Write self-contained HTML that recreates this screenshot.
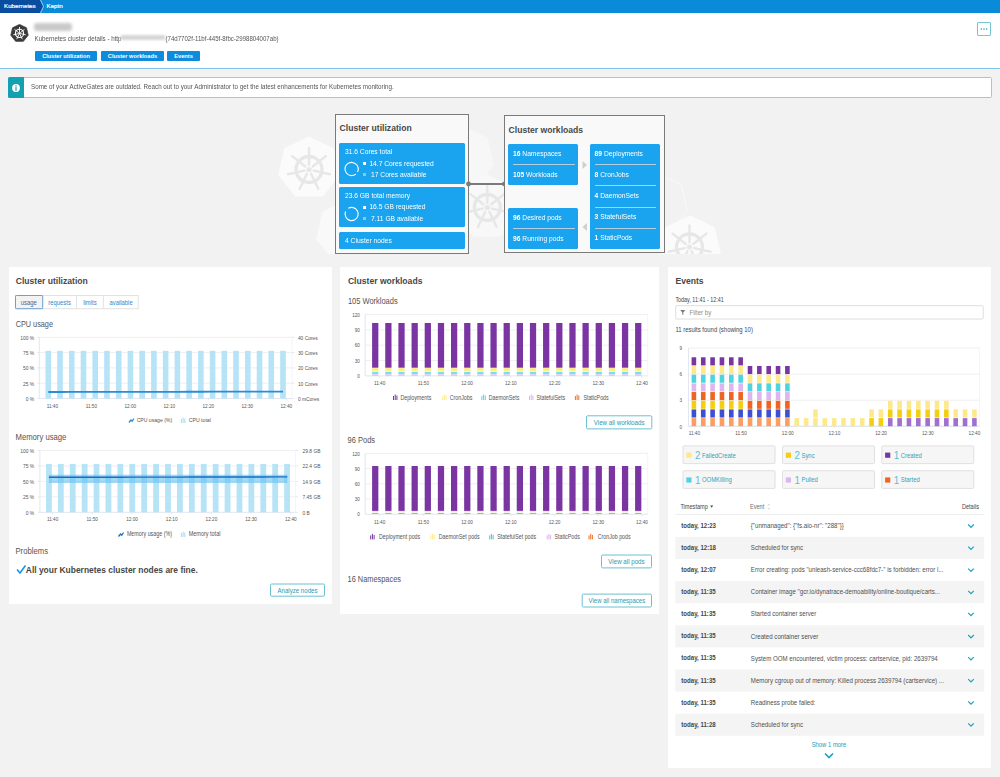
<!DOCTYPE html>
<html><head><meta charset="utf-8">
<style>
*{box-sizing:border-box;margin:0;padding:0}
html,body{width:1000px;height:777px;overflow:hidden}
body{background:#f2f2f2;font-family:"Liberation Sans",sans-serif;color:#454646;position:relative}
.a{position:absolute;white-space:nowrap}
.bc{left:0;top:0;width:1000px;height:13px;background:#0a8bd9}
.bcd{left:0;top:0;width:43px;height:13px;background:#0a4ca0;clip-path:polygon(0 0,40px 0,43px 6.5px,40px 13px,0 13px)}
.bct{color:#fff;font-size:6.2px;top:2px;-webkit-text-stroke:0.2px #fff}
.hdr{left:0;top:13px;width:1000px;height:56px;background:#fff;border-bottom:1px solid #80c3ea}
.btn{height:10px;background:#0e8cdb;border-radius:1px;color:#fff;font-size:5.7px;font-weight:bold;text-align:center;line-height:10px}
.alert{left:8px;top:77px;width:984px;height:21px;background:#fff;border:1px solid #8fd1d9;border-radius:1.5px}
.panel{background:#fff;top:267px}
.ptitle{font-weight:bold;font-size:8.6px;color:#454646}
.sub{font-size:8.6px;color:#525252}
.ol{background:#f9f9f9;border:1px solid #7a7a7a}
.bl{background:#1aa3ee;color:#fff;border-radius:1.5px}
.obtn{border:1px solid #5db6c6;border-radius:1.5px;color:#1a8aa0;font-size:6px;text-align:center;background:#fff}
.ovt{font-size:6.7px;color:#fff;line-height:8px;transform:scaleY(1.15);transform-origin:0 6.3px}
.sq{width:3px;height:3px;background:#fff}
.sep{height:1px;background:#b3cfe0}
.sy{transform:scaleY(1.2);transform-origin:0 5.7px}
</style></head><body>

<!-- breadcrumb -->
<div class="a bc"></div>
<div class="a bcd"></div>
<div class="a" style="left:39.5px;top:0;width:4px;height:13px;background:transparent;"><svg width="5" height="13" style="display:block"><polyline points="0.5,0 3.5,6.5 0.5,13" fill="none" stroke="#bcd7ef" stroke-width="0.8"/></svg></div>
<div class="a bct" style="left:4px">Kubernetes</div>
<div class="a bct" style="left:46.5px">Keptn</div>

<!-- header -->
<div class="a hdr"></div>
<div class="a" style="left:10px;top:24px;width:19px;height:18px">
<svg width="19" height="18" viewBox="0 0 19 18" style="display:block">
<polygon points="9.50,0.40 16.46,3.75 18.18,11.28 13.36,17.32 5.64,17.32 0.82,11.28 2.54,3.75" fill="#3b3b3b" stroke="#3b3b3b" stroke-width="0.8" stroke-linejoin="round"/>
<circle cx="9.5" cy="9.4" r="4.1" fill="none" stroke="#fff" stroke-width="1.1"/>
<g stroke="#fff" stroke-width="0.9" stroke-linecap="round"><line x1="9.50" y1="8.10" x2="9.50" y2="3.40"/><line x1="10.52" y1="8.59" x2="14.19" y2="5.66"/><line x1="10.77" y1="9.69" x2="15.35" y2="10.74"/><line x1="10.06" y1="10.57" x2="12.10" y2="14.81"/><line x1="8.94" y1="10.57" x2="6.90" y2="14.81"/><line x1="8.23" y1="9.69" x2="3.65" y2="10.74"/><line x1="8.48" y1="8.59" x2="4.81" y2="5.66"/></g>
<circle cx="9.5" cy="9.4" r="1.1" fill="#fff"/>
</svg></div>
<div class="a" style="left:34px;top:23px;width:38px;height:8px;background:#c9c9c9;filter:blur(1.5px);border-radius:3px"></div>
<div class="a sy" style="left:34.5px;top:35.2px;font-size:6.2px;color:#555">Kubernetes cluster details - http</div>
<div class="a" style="left:121px;top:35px;width:44px;height:5px;background:#d6d6d6;filter:blur(1.2px)"></div>
<div class="a sy" style="left:165.5px;top:35.2px;font-size:6.1px;color:#555">(74d7702f-11bf-445f-8fbc-2998804007ab)</div>
<div class="a btn" style="left:35px;top:51px;width:62px">Cluster utilization</div>
<div class="a btn" style="left:101px;top:51px;width:63px">Cluster workloads</div>
<div class="a btn" style="left:167px;top:51px;width:33px">Events</div>
<div class="a" style="left:977px;top:22px;width:14px;height:14px;border:1px solid #76c5d2;border-radius:1px;background:#fff"><svg width="12" height="12" style="display:block"><circle cx="3.3" cy="6" r="0.75" fill="#2a9bb0"/><circle cx="6" cy="6" r="0.75" fill="#2a9bb0"/><circle cx="8.7" cy="6" r="0.75" fill="#2a9bb0"/></svg></div>

<!-- alert -->
<div class="a alert"></div>
<div class="a" style="left:8px;top:77px;width:16px;height:21px;background:#13a0b1;border-radius:1.5px 0 0 1.5px"></div>
<svg class="a" style="left:11px;top:82.5px" width="10" height="10"><circle cx="5" cy="5" r="3.9" fill="#fff"/><rect x="4.4" y="2.3" width="1.2" height="1.2" fill="#13a0b1"/><rect x="4.4" y="4.1" width="1.2" height="3.6" fill="#13a0b1"/></svg>
<div class="a sy" style="left:31px;top:83.1px;font-size:6.26px;color:#555">Some of your ActiveGates are outdated. Reach out to your Administrator to get the latest enhancements for Kubernetes monitoring.</div>

<!-- overview -->
<svg class="a" style="left:250px;top:100px" width="500" height="154" viewBox="250 100 500 154">
<defs><g id="wheel" fill="none" stroke="#e7e7e7"><circle r="13" stroke-width="3.3"/><g stroke-width="2.4" stroke-linecap="round"><line x1="0.00" y1="-4.80" x2="0.00" y2="-21.50"/><line x1="3.75" y1="-2.99" x2="16.81" y2="-13.41"/><line x1="4.68" y1="1.07" x2="20.96" y2="4.78"/><line x1="2.08" y1="4.32" x2="9.33" y2="19.37"/><line x1="-2.08" y1="4.32" x2="-9.33" y2="19.37"/><line x1="-4.68" y1="1.07" x2="-20.96" y2="4.78"/><line x1="-3.75" y1="-2.99" x2="-16.81" y2="-13.41"/></g><circle r="2.6" fill="#e7e7e7" stroke="none"/></g></defs>
<polygon points="462.00,127.00 486.24,138.67 492.22,164.90 475.45,185.93 448.55,185.93 431.78,164.90 437.76,138.67" fill="#f7f7f7" stroke="#f7f7f7" stroke-width="3" stroke-linejoin="round"/>
<polygon points="348.00,201.00 372.24,212.67 378.22,238.90 361.45,259.93 334.55,259.93 317.78,238.90 323.76,212.67" fill="#f9f9f9" stroke="#f9f9f9" stroke-width="3" stroke-linejoin="round"/>
<polygon points="309.00,138.00 332.45,149.30 338.25,174.68 322.02,195.03 295.98,195.03 279.75,174.68 285.55,149.30" fill="#fbfbfb" stroke="#fbfbfb" stroke-width="3" stroke-linejoin="round"/>
<use href="#wheel" x="309" y="169.5"/>
<polygon points="487.00,176.00 511.24,187.67 517.22,213.90 500.45,234.93 473.55,234.93 456.78,213.90 462.76,187.67" fill="#f8f8f8" stroke="#f8f8f8" stroke-width="3" stroke-linejoin="round"/>
<use href="#wheel" x="487.3" y="207.5"/>
<polygon points="535.00,141.00 559.24,152.67 565.22,178.90 548.45,199.93 521.55,199.93 504.78,178.90 510.76,152.67" fill="none" stroke="#f9f9f9" stroke-width="1"/>
<polygon points="657.00,173.00 681.24,184.67 687.22,210.90 670.45,231.93 643.55,231.93 626.78,210.90 632.76,184.67" fill="none" stroke="#fafafa" stroke-width="1"/>
<polygon points="690.00,217.00 713.45,228.30 719.25,253.68 703.02,274.03 676.98,274.03 660.75,253.68 666.55,228.30" fill="#fbfbfb" stroke="#fbfbfb" stroke-width="3" stroke-linejoin="round"/>
<use href="#wheel" x="689.5" y="247"/>
</svg>

<div class="a ol" style="left:335px;top:114px;width:134px;height:140px"></div>
<div class="a" style="left:339.6px;top:123px;font-size:8.6px;font-weight:bold;color:#484848">Cluster utilization</div>
<div class="a bl" style="left:339.3px;top:143.2px;width:125.8px;height:40.5px"></div>
<div class="a bl" style="left:339.3px;top:187.3px;width:125.8px;height:40.2px"></div>
<div class="a bl" style="left:339.3px;top:231.6px;width:125.8px;height:17.8px"></div>
<div class="a ovt" style="left:345px;top:148px">31.6 Cores total</div>
<div class="a ovt" style="left:369.4px;top:159.6px">14.7 Cores requested</div>
<div class="a ovt" style="left:371px;top:170.6px">17 Cores available</div>
<div class="a ovt" style="left:345px;top:192.4px">23.6 GB total memory</div>
<div class="a ovt" style="left:369.4px;top:203.4px">16.5 GB requested</div>
<div class="a ovt" style="left:371px;top:214.6px">7.11 GB available</div>
<div class="a ovt" style="left:345px;top:236.6px">4 Cluster nodes</div>
<div class="a sq" style="left:363px;top:162px"></div>
<div class="a sq" style="left:363px;top:173px;opacity:.45"></div>
<div class="a sq" style="left:363px;top:206px"></div>
<div class="a sq" style="left:363px;top:217px;opacity:.45"></div>
<svg class="a" style="left:343px;top:161px" width="17" height="17"><circle cx="8.6" cy="8" r="6.6" fill="none" stroke="#fff" stroke-width="1.1" stroke-dasharray="38.6 2.9" transform="rotate(50 8.6 8)"/></svg>
<svg class="a" style="left:343px;top:205.5px" width="17" height="17"><circle cx="8.6" cy="8" r="6.6" fill="none" stroke="#fff" stroke-width="1.1" stroke-dasharray="36.9 4.6" transform="rotate(240 8.6 8)"/></svg>
<svg class="a" style="left:466px;top:180px" width="42" height="8"><line x1="2.5" y1="4" x2="38.5" y2="4" stroke="#7a7a7a" stroke-width="1.8"/><circle cx="2.5" cy="4" r="2.4" fill="#7a7a7a"/><circle cx="38.5" cy="4" r="2.4" fill="#7a7a7a"/></svg>

<div class="a ol" style="left:504px;top:115px;width:160.5px;height:138px"></div>
<div class="a" style="left:508.6px;top:124.6px;font-size:8.6px;font-weight:bold;color:#484848">Cluster workloads</div>
<div class="a bl" style="left:508.2px;top:144px;width:70.2px;height:41px"></div>
<div class="a bl" style="left:508.2px;top:208.1px;width:70.2px;height:40.9px"></div>
<div class="a bl" style="left:590.2px;top:144px;width:70.2px;height:105px"></div>
<div class="a sep" style="left:513px;top:164.2px;width:61.5px"></div>
<div class="a sep" style="left:513px;top:228.2px;width:61.5px"></div>
<div class="a sep" style="left:594.6px;top:164.2px;width:61.5px"></div>
<div class="a sep" style="left:594.6px;top:185.4px;width:61.5px"></div>
<div class="a sep" style="left:594.6px;top:207.2px;width:61.5px"></div>
<div class="a sep" style="left:594.6px;top:228.2px;width:61.5px"></div>
<div class="a ovt" style="left:513px;top:149.6px"><b>16</b> Namespaces</div>
<div class="a ovt" style="left:513px;top:170.6px"><b>105</b> Workloads</div>
<div class="a ovt" style="left:513px;top:213.6px"><b>96</b> Desired pods</div>
<div class="a ovt" style="left:513px;top:234.6px"><b>96</b> Running pods</div>
<div class="a ovt" style="left:594.6px;top:149.6px"><b>89</b> Deployments</div>
<div class="a ovt" style="left:594.6px;top:170.6px"><b>8</b> CronJobs</div>
<div class="a ovt" style="left:594.6px;top:191.6px"><b>4</b> DaemonSets</div>
<div class="a ovt" style="left:594.6px;top:213.4px"><b>3</b> StatefulSets</div>
<div class="a ovt" style="left:594.6px;top:234.4px"><b>1</b> StaticPods</div>
<svg class="a" style="left:581px;top:160px" width="8" height="10"><polygon points="1.5,1 6,5 1.5,9" fill="#cfcfcf"/></svg>
<svg class="a" style="left:581px;top:221.6px" width="8" height="10"><polygon points="6,1 1.5,5 6,9" fill="#cfcfcf"/></svg>


<div class="a" style="left:8.5px;top:267px;width:323.0px;height:337px;background:#fff"></div>
<div class="a" style="left:340.3px;top:267px;width:318.7px;height:347.29999999999995px;background:#fff"></div>
<div class="a" style="left:668px;top:267px;width:323px;height:500.70000000000005px;background:#fff"></div>
<svg class="a" style="left:0;top:0" width="1000" height="777" viewBox="0 0 1000 777" font-family=""Liberation Sans",sans-serif"><text x="15.70" y="0" transform="translate(0 284.26) scale(1 1.06)" font-size="8.6" fill="#474747" font-weight="bold" text-anchor="start" >Cluster utilization</text>
<rect x="15.50" y="295.50" width="122.70" height="13.20" fill="#fff" stroke="#e2e2e2" stroke-width="1"/>
<line x1="42.70" y1="295.50" x2="42.70" y2="308.70" stroke="#e2e2e2" stroke-width="1" />
<line x1="76.50" y1="295.50" x2="76.50" y2="308.70" stroke="#e2e2e2" stroke-width="1" />
<line x1="103.40" y1="295.50" x2="103.40" y2="308.70" stroke="#e2e2e2" stroke-width="1" />
<rect x="15.50" y="295.50" width="27.20" height="13.20" fill="#f3f3f3" stroke="#6f9fcf" stroke-width="1" rx="0.8"/>
<text x="28.85" y="0" transform="translate(0 305.21) scale(1 1.2)" font-size="5.9" fill="#3f6797" text-anchor="middle" >usage</text>
<text x="59.60" y="0" transform="translate(0 305.21) scale(1 1.2)" font-size="5.9" fill="#2d89cf" text-anchor="middle" >requests</text>
<text x="89.95" y="0" transform="translate(0 305.21) scale(1 1.2)" font-size="5.9" fill="#2d89cf" text-anchor="middle" >limits</text>
<text x="121.05" y="0" transform="translate(0 305.21) scale(1 1.2)" font-size="5.9" fill="#2d89cf" text-anchor="middle" >available</text>
<text x="15.70" y="0" transform="translate(0 326.87) scale(1 1.2)" font-size="7.3" fill="#545454" text-anchor="start" >CPU usage</text>
<line x1="39.30" y1="337.30" x2="292.00" y2="337.30" stroke="#ebebeb" stroke-width="0.8" />
<line x1="37.30" y1="337.30" x2="39.30" y2="337.30" stroke="#d9dfec" stroke-width="0.7" />
<text x="34.20" y="339.65" font-size="4.9" fill="#555" text-anchor="end" >100 %</text>
<text x="297.90" y="339.65" font-size="4.9" fill="#555" text-anchor="start" >40 Cores</text>
<line x1="292.00" y1="337.30" x2="294.50" y2="337.30" stroke="#d9dfec" stroke-width="0.7" />
<line x1="39.30" y1="352.60" x2="292.00" y2="352.60" stroke="#ebebeb" stroke-width="0.8" />
<line x1="37.30" y1="352.60" x2="39.30" y2="352.60" stroke="#d9dfec" stroke-width="0.7" />
<text x="34.20" y="354.95" font-size="4.9" fill="#555" text-anchor="end" >75 %</text>
<text x="297.90" y="354.95" font-size="4.9" fill="#555" text-anchor="start" >30 Cores</text>
<line x1="292.00" y1="352.60" x2="294.50" y2="352.60" stroke="#d9dfec" stroke-width="0.7" />
<line x1="39.30" y1="367.90" x2="292.00" y2="367.90" stroke="#ebebeb" stroke-width="0.8" />
<line x1="37.30" y1="367.90" x2="39.30" y2="367.90" stroke="#d9dfec" stroke-width="0.7" />
<text x="34.20" y="370.25" font-size="4.9" fill="#555" text-anchor="end" >50 %</text>
<text x="297.90" y="370.25" font-size="4.9" fill="#555" text-anchor="start" >20 Cores</text>
<line x1="292.00" y1="367.90" x2="294.50" y2="367.90" stroke="#d9dfec" stroke-width="0.7" />
<line x1="39.30" y1="383.20" x2="292.00" y2="383.20" stroke="#ebebeb" stroke-width="0.8" />
<line x1="37.30" y1="383.20" x2="39.30" y2="383.20" stroke="#d9dfec" stroke-width="0.7" />
<text x="34.20" y="385.55" font-size="4.9" fill="#555" text-anchor="end" >25 %</text>
<text x="297.90" y="385.55" font-size="4.9" fill="#555" text-anchor="start" >10 Cores</text>
<line x1="292.00" y1="383.20" x2="294.50" y2="383.20" stroke="#d9dfec" stroke-width="0.7" />
<line x1="39.30" y1="398.50" x2="292.00" y2="398.50" stroke="#d9dfec" stroke-width="0.8" />
<line x1="37.30" y1="398.50" x2="39.30" y2="398.50" stroke="#d9dfec" stroke-width="0.7" />
<text x="34.20" y="400.85" font-size="4.9" fill="#555" text-anchor="end" >0 %</text>
<text x="297.90" y="400.85" font-size="4.9" fill="#555" text-anchor="start" >0 mCores</text>
<line x1="292.00" y1="398.50" x2="294.50" y2="398.50" stroke="#d9dfec" stroke-width="0.7" />
<line x1="39.30" y1="337.30" x2="39.30" y2="398.50" stroke="#d9dfec" stroke-width="0.8" />
<line x1="292.00" y1="337.30" x2="292.00" y2="398.50" stroke="#efefef" stroke-width="0.6" />
<rect x="45.50" y="350.80" width="5.60" height="47.70" fill="#b7e3f7" />
<rect x="57.23" y="350.80" width="5.60" height="47.70" fill="#b7e3f7" />
<rect x="68.97" y="350.80" width="5.60" height="47.70" fill="#b7e3f7" />
<rect x="80.70" y="350.80" width="5.60" height="47.70" fill="#b7e3f7" />
<rect x="92.44" y="350.80" width="5.60" height="47.70" fill="#b7e3f7" />
<rect x="104.17" y="350.80" width="5.60" height="47.70" fill="#b7e3f7" />
<rect x="115.91" y="350.80" width="5.60" height="47.70" fill="#b7e3f7" />
<rect x="127.64" y="350.80" width="5.60" height="47.70" fill="#b7e3f7" />
<rect x="139.38" y="350.80" width="5.60" height="47.70" fill="#b7e3f7" />
<rect x="151.12" y="350.80" width="5.60" height="47.70" fill="#b7e3f7" />
<rect x="162.85" y="350.80" width="5.60" height="47.70" fill="#b7e3f7" />
<rect x="174.58" y="350.80" width="5.60" height="47.70" fill="#b7e3f7" />
<rect x="186.32" y="350.80" width="5.60" height="47.70" fill="#b7e3f7" />
<rect x="198.06" y="350.80" width="5.60" height="47.70" fill="#b7e3f7" />
<rect x="209.79" y="350.80" width="5.60" height="47.70" fill="#b7e3f7" />
<rect x="221.52" y="350.80" width="5.60" height="47.70" fill="#b7e3f7" />
<rect x="233.26" y="350.80" width="5.60" height="47.70" fill="#b7e3f7" />
<rect x="245.00" y="350.80" width="5.60" height="47.70" fill="#b7e3f7" />
<rect x="256.73" y="350.80" width="5.60" height="47.70" fill="#b7e3f7" />
<rect x="268.46" y="350.80" width="5.60" height="47.70" fill="#b7e3f7" />
<rect x="280.20" y="350.80" width="5.60" height="47.70" fill="#b7e3f7" />
<polyline points="48.3,392.00 60.0,391.98 71.8,391.96 83.5,391.94 95.2,391.92 107.0,391.90 118.7,391.88 130.4,391.86 142.2,391.84 153.9,391.82 165.6,391.80 177.4,391.78 189.1,391.76 200.9,391.74 212.6,391.72 224.3,391.70 236.1,391.68 247.8,391.66 259.5,391.64 271.3,391.62 283.0,391.60" fill="none" stroke="#2c8bd6" stroke-width="1.8"/>
<line x1="52.40" y1="398.50" x2="52.40" y2="400.50" stroke="#d9dfec" stroke-width="0.7" />
<text x="52.40" y="407.98" font-size="4.7" fill="#555" text-anchor="middle" >11:40</text>
<line x1="91.38" y1="398.50" x2="91.38" y2="400.50" stroke="#d9dfec" stroke-width="0.7" />
<text x="91.38" y="407.98" font-size="4.7" fill="#555" text-anchor="middle" >11:50</text>
<line x1="130.36" y1="398.50" x2="130.36" y2="400.50" stroke="#d9dfec" stroke-width="0.7" />
<text x="130.36" y="407.98" font-size="4.7" fill="#555" text-anchor="middle" >12:00</text>
<line x1="169.34" y1="398.50" x2="169.34" y2="400.50" stroke="#d9dfec" stroke-width="0.7" />
<text x="169.34" y="407.98" font-size="4.7" fill="#555" text-anchor="middle" >12:10</text>
<line x1="208.32" y1="398.50" x2="208.32" y2="400.50" stroke="#d9dfec" stroke-width="0.7" />
<text x="208.32" y="407.98" font-size="4.7" fill="#555" text-anchor="middle" >12:20</text>
<line x1="247.30" y1="398.50" x2="247.30" y2="400.50" stroke="#d9dfec" stroke-width="0.7" />
<text x="247.30" y="407.98" font-size="4.7" fill="#555" text-anchor="middle" >12:30</text>
<line x1="286.28" y1="398.50" x2="286.28" y2="400.50" stroke="#d9dfec" stroke-width="0.7" />
<text x="286.28" y="407.98" font-size="4.7" fill="#555" text-anchor="middle" >12:40</text>
<polyline points="128.90,422.50 130.90,420.00 132.20,421.30 133.90,418.50" fill="none" stroke="#2c8bd6" stroke-width="1.3"/>
<text x="136.70" y="0" transform="translate(0 422.35) scale(1 1.2)" font-size="5.1" fill="#555" text-anchor="start" >CPU usage (%)</text>
<rect x="180.90" y="419.00" width="1.00" height="4.00" fill="#a6dcf5" />
<rect x="182.60" y="417.50" width="1.00" height="5.50" fill="#a6dcf5" />
<rect x="184.30" y="418.50" width="1.00" height="4.50" fill="#a6dcf5" />
<text x="188.70" y="0" transform="translate(0 422.38) scale(1 1.2)" font-size="5.2" fill="#555" text-anchor="start" >CPU total</text>
<text x="15.50" y="0" transform="translate(0 440.49) scale(1 1.2)" font-size="7.7" fill="#545454" text-anchor="start" >Memory usage</text>
<line x1="39.90" y1="450.40" x2="295.50" y2="450.40" stroke="#ebebeb" stroke-width="0.8" />
<line x1="37.90" y1="450.40" x2="39.90" y2="450.40" stroke="#d9dfec" stroke-width="0.7" />
<text x="34.20" y="452.75" font-size="4.9" fill="#555" text-anchor="end" >100 %</text>
<text x="302.50" y="452.75" font-size="4.9" fill="#555" text-anchor="start" >29.8 GB</text>
<line x1="295.50" y1="450.40" x2="298.00" y2="450.40" stroke="#d9dfec" stroke-width="0.7" />
<line x1="39.90" y1="465.88" x2="295.50" y2="465.88" stroke="#ebebeb" stroke-width="0.8" />
<line x1="37.90" y1="465.88" x2="39.90" y2="465.88" stroke="#d9dfec" stroke-width="0.7" />
<text x="34.20" y="468.23" font-size="4.9" fill="#555" text-anchor="end" >75 %</text>
<text x="302.50" y="468.23" font-size="4.9" fill="#555" text-anchor="start" >22.4 GB</text>
<line x1="295.50" y1="465.88" x2="298.00" y2="465.88" stroke="#d9dfec" stroke-width="0.7" />
<line x1="39.90" y1="481.35" x2="295.50" y2="481.35" stroke="#ebebeb" stroke-width="0.8" />
<line x1="37.90" y1="481.35" x2="39.90" y2="481.35" stroke="#d9dfec" stroke-width="0.7" />
<text x="34.20" y="483.70" font-size="4.9" fill="#555" text-anchor="end" >50 %</text>
<text x="302.50" y="483.70" font-size="4.9" fill="#555" text-anchor="start" >14.9 GB</text>
<line x1="295.50" y1="481.35" x2="298.00" y2="481.35" stroke="#d9dfec" stroke-width="0.7" />
<line x1="39.90" y1="496.82" x2="295.50" y2="496.82" stroke="#ebebeb" stroke-width="0.8" />
<line x1="37.90" y1="496.82" x2="39.90" y2="496.82" stroke="#d9dfec" stroke-width="0.7" />
<text x="34.20" y="499.18" font-size="4.9" fill="#555" text-anchor="end" >25 %</text>
<text x="302.50" y="499.18" font-size="4.9" fill="#555" text-anchor="start" >7.45 GB</text>
<line x1="295.50" y1="496.82" x2="298.00" y2="496.82" stroke="#d9dfec" stroke-width="0.7" />
<line x1="39.90" y1="512.30" x2="295.50" y2="512.30" stroke="#d9dfec" stroke-width="0.8" />
<line x1="37.90" y1="512.30" x2="39.90" y2="512.30" stroke="#d9dfec" stroke-width="0.7" />
<text x="34.20" y="514.65" font-size="4.9" fill="#555" text-anchor="end" >0 %</text>
<text x="302.50" y="514.65" font-size="4.9" fill="#555" text-anchor="start" >0 B</text>
<line x1="295.50" y1="512.30" x2="298.00" y2="512.30" stroke="#d9dfec" stroke-width="0.7" />
<line x1="39.90" y1="450.40" x2="39.90" y2="512.30" stroke="#d9dfec" stroke-width="0.8" />
<line x1="295.50" y1="450.40" x2="295.50" y2="512.30" stroke="#efefef" stroke-width="0.6" />
<rect x="46.00" y="464.00" width="5.80" height="48.30" fill="#b7e3f7" />
<rect x="57.91" y="464.00" width="5.80" height="48.30" fill="#b7e3f7" />
<rect x="69.82" y="464.00" width="5.80" height="48.30" fill="#b7e3f7" />
<rect x="81.73" y="464.00" width="5.80" height="48.30" fill="#b7e3f7" />
<rect x="93.64" y="464.00" width="5.80" height="48.30" fill="#b7e3f7" />
<rect x="105.55" y="464.00" width="5.80" height="48.30" fill="#b7e3f7" />
<rect x="117.46" y="464.00" width="5.80" height="48.30" fill="#b7e3f7" />
<rect x="129.37" y="464.00" width="5.80" height="48.30" fill="#b7e3f7" />
<rect x="141.28" y="464.00" width="5.80" height="48.30" fill="#b7e3f7" />
<rect x="153.19" y="464.00" width="5.80" height="48.30" fill="#b7e3f7" />
<rect x="165.10" y="464.00" width="5.80" height="48.30" fill="#b7e3f7" />
<rect x="177.01" y="464.00" width="5.80" height="48.30" fill="#b7e3f7" />
<rect x="188.92" y="464.00" width="5.80" height="48.30" fill="#b7e3f7" />
<rect x="200.83" y="464.00" width="5.80" height="48.30" fill="#b7e3f7" />
<rect x="212.74" y="464.00" width="5.80" height="48.30" fill="#b7e3f7" />
<rect x="224.65" y="464.00" width="5.80" height="48.30" fill="#b7e3f7" />
<rect x="236.56" y="464.00" width="5.80" height="48.30" fill="#b7e3f7" />
<rect x="248.47" y="464.00" width="5.80" height="48.30" fill="#b7e3f7" />
<rect x="260.38" y="464.00" width="5.80" height="48.30" fill="#b7e3f7" />
<rect x="272.29" y="464.00" width="5.80" height="48.30" fill="#b7e3f7" />
<rect x="284.20" y="464.00" width="5.80" height="48.30" fill="#b7e3f7" />
<rect x="48.90" y="474.70" width="238.40" height="8.30" fill="#62bff0" opacity="0.6"/>
<polyline points="48.9,477.30 60.8,477.28 72.7,477.26 84.7,477.24 96.6,477.22 108.5,477.20 120.4,477.18 132.3,477.16 144.3,477.14 156.2,477.12 168.1,477.10 180.0,477.08 191.9,477.06 203.9,477.04 215.8,477.02 227.7,477.00 239.6,476.98 251.5,476.96 263.5,476.94 275.4,476.92 287.3,476.90" fill="none" stroke="#1a6cbd" stroke-width="1.4"/>
<line x1="52.60" y1="512.30" x2="52.60" y2="514.30" stroke="#d9dfec" stroke-width="0.7" />
<text x="52.60" y="521.28" font-size="4.7" fill="#555" text-anchor="middle" >11:40</text>
<line x1="92.30" y1="512.30" x2="92.30" y2="514.30" stroke="#d9dfec" stroke-width="0.7" />
<text x="92.30" y="521.28" font-size="4.7" fill="#555" text-anchor="middle" >11:50</text>
<line x1="132.00" y1="512.30" x2="132.00" y2="514.30" stroke="#d9dfec" stroke-width="0.7" />
<text x="132.00" y="521.28" font-size="4.7" fill="#555" text-anchor="middle" >12:00</text>
<line x1="171.70" y1="512.30" x2="171.70" y2="514.30" stroke="#d9dfec" stroke-width="0.7" />
<text x="171.70" y="521.28" font-size="4.7" fill="#555" text-anchor="middle" >12:10</text>
<line x1="211.40" y1="512.30" x2="211.40" y2="514.30" stroke="#d9dfec" stroke-width="0.7" />
<text x="211.40" y="521.28" font-size="4.7" fill="#555" text-anchor="middle" >12:20</text>
<line x1="251.10" y1="512.30" x2="251.10" y2="514.30" stroke="#d9dfec" stroke-width="0.7" />
<text x="251.10" y="521.28" font-size="4.7" fill="#555" text-anchor="middle" >12:30</text>
<line x1="290.80" y1="512.30" x2="290.80" y2="514.30" stroke="#d9dfec" stroke-width="0.7" />
<text x="290.80" y="521.28" font-size="4.7" fill="#555" text-anchor="middle" >12:40</text>
<polyline points="118.50,536.50 120.50,534.00 121.80,535.30 123.50,532.50" fill="none" stroke="#1f6fbf" stroke-width="1.3"/>
<text x="126.90" y="0" transform="translate(0 536.33) scale(1 1.2)" font-size="5.35" fill="#555" text-anchor="start" >Memory usage (%)</text>
<rect x="180.90" y="533.00" width="1.00" height="4.00" fill="#a6dcf5" />
<rect x="182.60" y="531.50" width="1.00" height="5.50" fill="#a6dcf5" />
<rect x="184.30" y="532.50" width="1.00" height="4.50" fill="#a6dcf5" />
<text x="188.70" y="0" transform="translate(0 536.38) scale(1 1.2)" font-size="5.5" fill="#555" text-anchor="start" >Memory total</text>
<text x="15.50" y="0" transform="translate(0 553.69) scale(1 1.2)" font-size="7.7" fill="#545454" text-anchor="start" >Problems</text>
<polyline points="17,569.5 20,573 25.5,565.5" fill="none" stroke="#1496e1" stroke-width="1.6"/>
<text x="25.80" y="0" transform="translate(0 573.32) scale(1 1.06)" font-size="8.45" fill="#474747" font-weight="bold" text-anchor="start" >All your Kubernetes cluster nodes are fine.</text>
<rect x="270.50" y="584.00" width="54.00" height="12.20" rx="1.2" fill="#fff" stroke="#6cc0cf" stroke-width="1"/>
<text x="297.50" y="0" transform="translate(0 592.68) scale(1 1.2)" font-size="6.1" fill="#2a9ab0" text-anchor="middle" >Analyze nodes</text>
<text x="347.90" y="0" transform="translate(0 284.06) scale(1 1.06)" font-size="8.6" fill="#474747" font-weight="bold" text-anchor="start" >Cluster workloads</text>
<text x="347.90" y="0" transform="translate(0 304.43) scale(1 1.2)" font-size="7.5" fill="#545454" text-anchor="start" >105 Workloads</text>
<line x1="365.20" y1="314.50" x2="647.70" y2="314.50" stroke="#ebebeb" stroke-width="0.8" />
<text x="359.80" y="316.75" font-size="4.6" fill="#555" text-anchor="end" >120</text>
<line x1="365.20" y1="329.85" x2="647.70" y2="329.85" stroke="#ebebeb" stroke-width="0.8" />
<text x="359.80" y="332.10" font-size="4.6" fill="#555" text-anchor="end" >90</text>
<line x1="365.20" y1="345.20" x2="647.70" y2="345.20" stroke="#ebebeb" stroke-width="0.8" />
<text x="359.80" y="347.45" font-size="4.6" fill="#555" text-anchor="end" >60</text>
<line x1="365.20" y1="360.55" x2="647.70" y2="360.55" stroke="#ebebeb" stroke-width="0.8" />
<text x="359.80" y="362.80" font-size="4.6" fill="#555" text-anchor="end" >30</text>
<line x1="365.20" y1="375.90" x2="647.70" y2="375.90" stroke="#d9dfec" stroke-width="0.8" />
<text x="359.80" y="378.15" font-size="4.6" fill="#555" text-anchor="end" >0</text>
<line x1="365.20" y1="314.50" x2="365.20" y2="375.90" stroke="#d9dfec" stroke-width="0.8" />
<line x1="647.70" y1="314.50" x2="647.70" y2="375.90" stroke="#efefef" stroke-width="0.6" />
<rect x="372.10" y="374.50" width="6.25" height="1.20" fill="#e5b5f2" />
<rect x="372.10" y="371.90" width="6.25" height="2.30" fill="#78dfea" />
<rect x="372.10" y="367.70" width="6.25" height="3.60" fill="#fdec8d" />
<rect x="372.10" y="323.00" width="6.25" height="44.70" fill="#7a35a3" />
<rect x="385.25" y="374.50" width="6.25" height="1.20" fill="#e5b5f2" />
<rect x="385.25" y="371.90" width="6.25" height="2.30" fill="#78dfea" />
<rect x="385.25" y="367.70" width="6.25" height="3.60" fill="#fdec8d" />
<rect x="385.25" y="323.00" width="6.25" height="44.70" fill="#7a35a3" />
<rect x="398.40" y="374.50" width="6.25" height="1.20" fill="#e5b5f2" />
<rect x="398.40" y="371.90" width="6.25" height="2.30" fill="#78dfea" />
<rect x="398.40" y="367.70" width="6.25" height="3.60" fill="#fdec8d" />
<rect x="398.40" y="323.00" width="6.25" height="44.70" fill="#7a35a3" />
<rect x="411.55" y="374.50" width="6.25" height="1.20" fill="#e5b5f2" />
<rect x="411.55" y="371.90" width="6.25" height="2.30" fill="#78dfea" />
<rect x="411.55" y="367.70" width="6.25" height="3.60" fill="#fdec8d" />
<rect x="411.55" y="323.00" width="6.25" height="44.70" fill="#7a35a3" />
<rect x="424.70" y="374.50" width="6.25" height="1.20" fill="#e5b5f2" />
<rect x="424.70" y="371.90" width="6.25" height="2.30" fill="#78dfea" />
<rect x="424.70" y="367.70" width="6.25" height="3.60" fill="#fdec8d" />
<rect x="424.70" y="323.00" width="6.25" height="44.70" fill="#7a35a3" />
<rect x="437.85" y="374.50" width="6.25" height="1.20" fill="#e5b5f2" />
<rect x="437.85" y="371.90" width="6.25" height="2.30" fill="#78dfea" />
<rect x="437.85" y="367.70" width="6.25" height="3.60" fill="#fdec8d" />
<rect x="437.85" y="323.00" width="6.25" height="44.70" fill="#7a35a3" />
<rect x="451.00" y="374.50" width="6.25" height="1.20" fill="#e5b5f2" />
<rect x="451.00" y="371.90" width="6.25" height="2.30" fill="#78dfea" />
<rect x="451.00" y="367.70" width="6.25" height="3.60" fill="#fdec8d" />
<rect x="451.00" y="323.00" width="6.25" height="44.70" fill="#7a35a3" />
<rect x="464.15" y="374.50" width="6.25" height="1.20" fill="#e5b5f2" />
<rect x="464.15" y="371.90" width="6.25" height="2.30" fill="#78dfea" />
<rect x="464.15" y="367.70" width="6.25" height="3.60" fill="#fdec8d" />
<rect x="464.15" y="323.00" width="6.25" height="44.70" fill="#7a35a3" />
<rect x="477.30" y="374.50" width="6.25" height="1.20" fill="#e5b5f2" />
<rect x="477.30" y="371.90" width="6.25" height="2.30" fill="#78dfea" />
<rect x="477.30" y="367.70" width="6.25" height="3.60" fill="#fdec8d" />
<rect x="477.30" y="323.00" width="6.25" height="44.70" fill="#7a35a3" />
<rect x="490.45" y="374.50" width="6.25" height="1.20" fill="#e5b5f2" />
<rect x="490.45" y="371.90" width="6.25" height="2.30" fill="#78dfea" />
<rect x="490.45" y="367.70" width="6.25" height="3.60" fill="#fdec8d" />
<rect x="490.45" y="323.00" width="6.25" height="44.70" fill="#7a35a3" />
<rect x="503.60" y="374.50" width="6.25" height="1.20" fill="#e5b5f2" />
<rect x="503.60" y="371.90" width="6.25" height="2.30" fill="#78dfea" />
<rect x="503.60" y="367.70" width="6.25" height="3.60" fill="#fdec8d" />
<rect x="503.60" y="323.00" width="6.25" height="44.70" fill="#7a35a3" />
<rect x="516.75" y="374.50" width="6.25" height="1.20" fill="#e5b5f2" />
<rect x="516.75" y="371.90" width="6.25" height="2.30" fill="#78dfea" />
<rect x="516.75" y="367.70" width="6.25" height="3.60" fill="#fdec8d" />
<rect x="516.75" y="323.00" width="6.25" height="44.70" fill="#7a35a3" />
<rect x="529.90" y="374.50" width="6.25" height="1.20" fill="#e5b5f2" />
<rect x="529.90" y="371.90" width="6.25" height="2.30" fill="#78dfea" />
<rect x="529.90" y="367.70" width="6.25" height="3.60" fill="#fdec8d" />
<rect x="529.90" y="323.00" width="6.25" height="44.70" fill="#7a35a3" />
<rect x="543.05" y="374.50" width="6.25" height="1.20" fill="#e5b5f2" />
<rect x="543.05" y="371.90" width="6.25" height="2.30" fill="#78dfea" />
<rect x="543.05" y="367.70" width="6.25" height="3.60" fill="#fdec8d" />
<rect x="543.05" y="323.00" width="6.25" height="44.70" fill="#7a35a3" />
<rect x="556.20" y="374.50" width="6.25" height="1.20" fill="#e5b5f2" />
<rect x="556.20" y="371.90" width="6.25" height="2.30" fill="#78dfea" />
<rect x="556.20" y="367.70" width="6.25" height="3.60" fill="#fdec8d" />
<rect x="556.20" y="323.00" width="6.25" height="44.70" fill="#7a35a3" />
<rect x="569.35" y="374.50" width="6.25" height="1.20" fill="#e5b5f2" />
<rect x="569.35" y="371.90" width="6.25" height="2.30" fill="#78dfea" />
<rect x="569.35" y="367.70" width="6.25" height="3.60" fill="#fdec8d" />
<rect x="569.35" y="323.00" width="6.25" height="44.70" fill="#7a35a3" />
<rect x="582.50" y="374.50" width="6.25" height="1.20" fill="#e5b5f2" />
<rect x="582.50" y="371.90" width="6.25" height="2.30" fill="#78dfea" />
<rect x="582.50" y="367.70" width="6.25" height="3.60" fill="#fdec8d" />
<rect x="582.50" y="323.00" width="6.25" height="44.70" fill="#7a35a3" />
<rect x="595.65" y="374.50" width="6.25" height="1.20" fill="#e5b5f2" />
<rect x="595.65" y="371.90" width="6.25" height="2.30" fill="#78dfea" />
<rect x="595.65" y="367.70" width="6.25" height="3.60" fill="#fdec8d" />
<rect x="595.65" y="323.00" width="6.25" height="44.70" fill="#7a35a3" />
<rect x="608.80" y="374.50" width="6.25" height="1.20" fill="#e5b5f2" />
<rect x="608.80" y="371.90" width="6.25" height="2.30" fill="#78dfea" />
<rect x="608.80" y="367.70" width="6.25" height="3.60" fill="#fdec8d" />
<rect x="608.80" y="323.00" width="6.25" height="44.70" fill="#7a35a3" />
<rect x="621.95" y="374.50" width="6.25" height="1.20" fill="#e5b5f2" />
<rect x="621.95" y="371.90" width="6.25" height="2.30" fill="#78dfea" />
<rect x="621.95" y="367.70" width="6.25" height="3.60" fill="#fdec8d" />
<rect x="621.95" y="323.00" width="6.25" height="44.70" fill="#7a35a3" />
<rect x="635.10" y="374.50" width="6.25" height="1.20" fill="#e5b5f2" />
<rect x="635.10" y="371.90" width="6.25" height="2.30" fill="#78dfea" />
<rect x="635.10" y="367.70" width="6.25" height="3.60" fill="#fdec8d" />
<rect x="635.10" y="323.00" width="6.25" height="44.70" fill="#7a35a3" />
<line x1="379.60" y1="375.90" x2="379.60" y2="377.90" stroke="#d9dfec" stroke-width="0.7" />
<text x="379.60" y="384.98" font-size="4.7" fill="#555" text-anchor="middle" >11:40</text>
<line x1="423.33" y1="375.90" x2="423.33" y2="377.90" stroke="#d9dfec" stroke-width="0.7" />
<text x="423.33" y="384.98" font-size="4.7" fill="#555" text-anchor="middle" >11:50</text>
<line x1="467.06" y1="375.90" x2="467.06" y2="377.90" stroke="#d9dfec" stroke-width="0.7" />
<text x="467.06" y="384.98" font-size="4.7" fill="#555" text-anchor="middle" >12:00</text>
<line x1="510.79" y1="375.90" x2="510.79" y2="377.90" stroke="#d9dfec" stroke-width="0.7" />
<text x="510.79" y="384.98" font-size="4.7" fill="#555" text-anchor="middle" >12:10</text>
<line x1="554.52" y1="375.90" x2="554.52" y2="377.90" stroke="#d9dfec" stroke-width="0.7" />
<text x="554.52" y="384.98" font-size="4.7" fill="#555" text-anchor="middle" >12:20</text>
<line x1="598.25" y1="375.90" x2="598.25" y2="377.90" stroke="#d9dfec" stroke-width="0.7" />
<text x="598.25" y="384.98" font-size="4.7" fill="#555" text-anchor="middle" >12:30</text>
<line x1="641.98" y1="375.90" x2="641.98" y2="377.90" stroke="#d9dfec" stroke-width="0.7" />
<text x="641.98" y="384.98" font-size="4.7" fill="#555" text-anchor="middle" >12:40</text>
<rect x="393.00" y="396.00" width="1.00" height="4.00" fill="#7a35a3" />
<rect x="394.70" y="394.50" width="1.00" height="5.50" fill="#7a35a3" />
<rect x="396.40" y="395.50" width="1.00" height="4.50" fill="#7a35a3" />
<text x="400.40" y="0" transform="translate(0 399.52) scale(1 1.2)" font-size="5.3" fill="#555" text-anchor="start" >Deployments</text>
<rect x="442.20" y="396.00" width="1.00" height="4.00" fill="#fdec8d" />
<rect x="443.90" y="394.50" width="1.00" height="5.50" fill="#fdec8d" />
<rect x="445.60" y="395.50" width="1.00" height="4.50" fill="#fdec8d" />
<text x="449.70" y="0" transform="translate(0 399.52) scale(1 1.2)" font-size="5.3" fill="#555" text-anchor="start" >CronJobs</text>
<rect x="481.40" y="396.00" width="1.00" height="4.00" fill="#5fd3e3" />
<rect x="483.10" y="394.50" width="1.00" height="5.50" fill="#5fd3e3" />
<rect x="484.80" y="395.50" width="1.00" height="4.50" fill="#5fd3e3" />
<text x="488.80" y="0" transform="translate(0 399.52) scale(1 1.2)" font-size="5.3" fill="#555" text-anchor="start" >DaemonSets</text>
<rect x="529.00" y="396.00" width="1.00" height="4.00" fill="#dcb3f0" />
<rect x="530.70" y="394.50" width="1.00" height="5.50" fill="#dcb3f0" />
<rect x="532.40" y="395.50" width="1.00" height="4.50" fill="#dcb3f0" />
<text x="536.50" y="0" transform="translate(0 399.52) scale(1 1.2)" font-size="5.3" fill="#555" text-anchor="start" >StatefulSets</text>
<rect x="574.90" y="396.00" width="1.00" height="4.00" fill="#f0702a" />
<rect x="576.60" y="394.50" width="1.00" height="5.50" fill="#f0702a" />
<rect x="578.30" y="395.50" width="1.00" height="4.50" fill="#f0702a" />
<text x="583.40" y="0" transform="translate(0 399.52) scale(1 1.2)" font-size="5.3" fill="#555" text-anchor="start" >StaticPods</text>
<rect x="586.50" y="415.80" width="65.30" height="13.10" rx="1.2" fill="#fff" stroke="#6cc0cf" stroke-width="1"/>
<text x="619.15" y="0" transform="translate(0 424.96) scale(1 1.2)" font-size="6.2" fill="#2a9ab0" text-anchor="middle" >View all workloads</text>
<text x="347.60" y="0" transform="translate(0 442.73) scale(1 1.2)" font-size="7.5" fill="#545454" text-anchor="start" >96 Pods</text>
<line x1="365.20" y1="453.40" x2="647.70" y2="453.40" stroke="#ebebeb" stroke-width="0.8" />
<text x="359.80" y="455.65" font-size="4.6" fill="#555" text-anchor="end" >120</text>
<line x1="365.20" y1="468.60" x2="647.70" y2="468.60" stroke="#ebebeb" stroke-width="0.8" />
<text x="359.80" y="470.85" font-size="4.6" fill="#555" text-anchor="end" >90</text>
<line x1="365.20" y1="483.80" x2="647.70" y2="483.80" stroke="#ebebeb" stroke-width="0.8" />
<text x="359.80" y="486.05" font-size="4.6" fill="#555" text-anchor="end" >60</text>
<line x1="365.20" y1="499.00" x2="647.70" y2="499.00" stroke="#ebebeb" stroke-width="0.8" />
<text x="359.80" y="501.25" font-size="4.6" fill="#555" text-anchor="end" >30</text>
<line x1="365.20" y1="514.20" x2="647.70" y2="514.20" stroke="#d9dfec" stroke-width="0.8" />
<text x="359.80" y="516.45" font-size="4.6" fill="#555" text-anchor="end" >0</text>
<line x1="365.20" y1="453.40" x2="365.20" y2="514.20" stroke="#d9dfec" stroke-width="0.8" />
<line x1="647.70" y1="453.40" x2="647.70" y2="514.20" stroke="#efefef" stroke-width="0.6" />
<rect x="372.10" y="512.90" width="6.25" height="1.00" fill="#52d0e0" />
<rect x="372.10" y="510.90" width="6.25" height="1.40" fill="#fdf08f" />
<rect x="372.10" y="466.00" width="6.25" height="44.90" fill="#7a35a3" />
<rect x="385.25" y="512.90" width="6.25" height="1.00" fill="#52d0e0" />
<rect x="385.25" y="510.90" width="6.25" height="1.40" fill="#fdf08f" />
<rect x="385.25" y="466.00" width="6.25" height="44.90" fill="#7a35a3" />
<rect x="398.40" y="512.90" width="6.25" height="1.00" fill="#52d0e0" />
<rect x="398.40" y="510.90" width="6.25" height="1.40" fill="#fdf08f" />
<rect x="398.40" y="466.00" width="6.25" height="44.90" fill="#7a35a3" />
<rect x="411.55" y="512.90" width="6.25" height="1.00" fill="#52d0e0" />
<rect x="411.55" y="510.90" width="6.25" height="1.40" fill="#fdf08f" />
<rect x="411.55" y="466.00" width="6.25" height="44.90" fill="#7a35a3" />
<rect x="424.70" y="512.90" width="6.25" height="1.00" fill="#52d0e0" />
<rect x="424.70" y="510.90" width="6.25" height="1.40" fill="#fdf08f" />
<rect x="424.70" y="466.00" width="6.25" height="44.90" fill="#7a35a3" />
<rect x="437.85" y="512.90" width="6.25" height="1.00" fill="#52d0e0" />
<rect x="437.85" y="510.90" width="6.25" height="1.40" fill="#fdf08f" />
<rect x="437.85" y="466.00" width="6.25" height="44.90" fill="#7a35a3" />
<rect x="451.00" y="512.90" width="6.25" height="1.00" fill="#52d0e0" />
<rect x="451.00" y="510.90" width="6.25" height="1.40" fill="#fdf08f" />
<rect x="451.00" y="466.00" width="6.25" height="44.90" fill="#7a35a3" />
<rect x="464.15" y="512.90" width="6.25" height="1.00" fill="#52d0e0" />
<rect x="464.15" y="510.90" width="6.25" height="1.40" fill="#fdf08f" />
<rect x="464.15" y="466.00" width="6.25" height="44.90" fill="#7a35a3" />
<rect x="477.30" y="512.90" width="6.25" height="1.00" fill="#52d0e0" />
<rect x="477.30" y="510.90" width="6.25" height="1.40" fill="#fdf08f" />
<rect x="477.30" y="466.00" width="6.25" height="44.90" fill="#7a35a3" />
<rect x="490.45" y="512.90" width="6.25" height="1.00" fill="#52d0e0" />
<rect x="490.45" y="510.90" width="6.25" height="1.40" fill="#fdf08f" />
<rect x="490.45" y="466.00" width="6.25" height="44.90" fill="#7a35a3" />
<rect x="503.60" y="512.90" width="6.25" height="1.00" fill="#52d0e0" />
<rect x="503.60" y="510.90" width="6.25" height="1.40" fill="#fdf08f" />
<rect x="503.60" y="466.00" width="6.25" height="44.90" fill="#7a35a3" />
<rect x="516.75" y="512.90" width="6.25" height="1.00" fill="#52d0e0" />
<rect x="516.75" y="510.90" width="6.25" height="1.40" fill="#fdf08f" />
<rect x="516.75" y="466.00" width="6.25" height="44.90" fill="#7a35a3" />
<rect x="529.90" y="512.90" width="6.25" height="1.00" fill="#52d0e0" />
<rect x="529.90" y="510.90" width="6.25" height="1.40" fill="#fdf08f" />
<rect x="529.90" y="466.00" width="6.25" height="44.90" fill="#7a35a3" />
<rect x="543.05" y="512.90" width="6.25" height="1.00" fill="#52d0e0" />
<rect x="543.05" y="510.90" width="6.25" height="1.40" fill="#fdf08f" />
<rect x="543.05" y="466.00" width="6.25" height="44.90" fill="#7a35a3" />
<rect x="556.20" y="512.90" width="6.25" height="1.00" fill="#52d0e0" />
<rect x="556.20" y="510.90" width="6.25" height="1.40" fill="#fdf08f" />
<rect x="556.20" y="466.00" width="6.25" height="44.90" fill="#7a35a3" />
<rect x="569.35" y="512.90" width="6.25" height="1.00" fill="#52d0e0" />
<rect x="569.35" y="510.90" width="6.25" height="1.40" fill="#fdf08f" />
<rect x="569.35" y="466.00" width="6.25" height="44.90" fill="#7a35a3" />
<rect x="582.50" y="512.90" width="6.25" height="1.00" fill="#52d0e0" />
<rect x="582.50" y="510.90" width="6.25" height="1.40" fill="#fdf08f" />
<rect x="582.50" y="466.00" width="6.25" height="44.90" fill="#7a35a3" />
<rect x="595.65" y="512.90" width="6.25" height="1.00" fill="#52d0e0" />
<rect x="595.65" y="510.90" width="6.25" height="1.40" fill="#fdf08f" />
<rect x="595.65" y="466.00" width="6.25" height="44.90" fill="#7a35a3" />
<rect x="608.80" y="512.90" width="6.25" height="1.00" fill="#52d0e0" />
<rect x="608.80" y="510.90" width="6.25" height="1.40" fill="#fdf08f" />
<rect x="608.80" y="466.00" width="6.25" height="44.90" fill="#7a35a3" />
<rect x="621.95" y="512.90" width="6.25" height="1.00" fill="#52d0e0" />
<rect x="621.95" y="510.90" width="6.25" height="1.40" fill="#fdf08f" />
<rect x="621.95" y="466.00" width="6.25" height="44.90" fill="#7a35a3" />
<rect x="635.10" y="512.90" width="6.25" height="1.00" fill="#52d0e0" />
<rect x="635.10" y="510.90" width="6.25" height="1.40" fill="#fdf08f" />
<rect x="635.10" y="466.00" width="6.25" height="44.90" fill="#7a35a3" />
<line x1="379.60" y1="514.20" x2="379.60" y2="516.20" stroke="#d9dfec" stroke-width="0.7" />
<text x="379.60" y="523.58" font-size="4.7" fill="#555" text-anchor="middle" >11:40</text>
<line x1="423.33" y1="514.20" x2="423.33" y2="516.20" stroke="#d9dfec" stroke-width="0.7" />
<text x="423.33" y="523.58" font-size="4.7" fill="#555" text-anchor="middle" >11:50</text>
<line x1="467.06" y1="514.20" x2="467.06" y2="516.20" stroke="#d9dfec" stroke-width="0.7" />
<text x="467.06" y="523.58" font-size="4.7" fill="#555" text-anchor="middle" >12:00</text>
<line x1="510.79" y1="514.20" x2="510.79" y2="516.20" stroke="#d9dfec" stroke-width="0.7" />
<text x="510.79" y="523.58" font-size="4.7" fill="#555" text-anchor="middle" >12:10</text>
<line x1="554.52" y1="514.20" x2="554.52" y2="516.20" stroke="#d9dfec" stroke-width="0.7" />
<text x="554.52" y="523.58" font-size="4.7" fill="#555" text-anchor="middle" >12:20</text>
<line x1="598.25" y1="514.20" x2="598.25" y2="516.20" stroke="#d9dfec" stroke-width="0.7" />
<text x="598.25" y="523.58" font-size="4.7" fill="#555" text-anchor="middle" >12:30</text>
<line x1="641.98" y1="514.20" x2="641.98" y2="516.20" stroke="#d9dfec" stroke-width="0.7" />
<text x="641.98" y="523.58" font-size="4.7" fill="#555" text-anchor="middle" >12:40</text>
<rect x="370.20" y="535.40" width="1.00" height="4.00" fill="#7a35a3" />
<rect x="371.90" y="533.90" width="1.00" height="5.50" fill="#7a35a3" />
<rect x="373.60" y="534.90" width="1.00" height="4.50" fill="#7a35a3" />
<text x="379.00" y="0" transform="translate(0 538.92) scale(1 1.2)" font-size="5.3" fill="#555" text-anchor="start" >Deployment pods</text>
<rect x="430.30" y="535.40" width="1.00" height="4.00" fill="#fdec8d" />
<rect x="432.00" y="533.90" width="1.00" height="5.50" fill="#fdec8d" />
<rect x="433.70" y="534.90" width="1.00" height="4.50" fill="#fdec8d" />
<text x="438.80" y="0" transform="translate(0 538.92) scale(1 1.2)" font-size="5.3" fill="#555" text-anchor="start" >DaemonSet pods</text>
<rect x="489.20" y="535.40" width="1.00" height="4.00" fill="#3dc9dc" />
<rect x="490.90" y="533.90" width="1.00" height="5.50" fill="#3dc9dc" />
<rect x="492.60" y="534.90" width="1.00" height="4.50" fill="#3dc9dc" />
<text x="497.30" y="0" transform="translate(0 538.92) scale(1 1.2)" font-size="5.3" fill="#555" text-anchor="start" >StatefulSet pods</text>
<rect x="546.70" y="535.40" width="1.00" height="4.00" fill="#dcb3f0" />
<rect x="548.40" y="533.90" width="1.00" height="5.50" fill="#dcb3f0" />
<rect x="550.10" y="534.90" width="1.00" height="4.50" fill="#dcb3f0" />
<text x="554.50" y="0" transform="translate(0 538.92) scale(1 1.2)" font-size="5.3" fill="#555" text-anchor="start" >StaticPods</text>
<rect x="588.50" y="535.40" width="1.00" height="4.00" fill="#f0702a" />
<rect x="590.20" y="533.90" width="1.00" height="5.50" fill="#f0702a" />
<rect x="591.90" y="534.90" width="1.00" height="4.50" fill="#f0702a" />
<text x="597.70" y="0" transform="translate(0 538.92) scale(1 1.2)" font-size="5.3" fill="#555" text-anchor="start" >CronJob pods</text>
<rect x="601.50" y="555.00" width="50.00" height="12.90" rx="1.2" fill="#fff" stroke="#6cc0cf" stroke-width="1"/>
<text x="626.50" y="0" transform="translate(0 564.06) scale(1 1.2)" font-size="6.2" fill="#2a9ab0" text-anchor="middle" >View all pods</text>
<text x="347.60" y="0" transform="translate(0 581.90) scale(1 1.2)" font-size="7.4" fill="#545454" text-anchor="start" >16 Namespaces</text>
<rect x="582.20" y="594.10" width="69.30" height="12.90" rx="1.2" fill="#fff" stroke="#6cc0cf" stroke-width="1"/>
<text x="616.85" y="0" transform="translate(0 603.11) scale(1 1.2)" font-size="6.05" fill="#2a9ab0" text-anchor="middle" >View all namespaces</text>
<text x="675.40" y="0" transform="translate(0 284.46) scale(1 1.06)" font-size="8.6" fill="#474747" font-weight="bold" text-anchor="start" >Events</text>
<text x="675.40" y="0" transform="translate(0 301.55) scale(1 1.2)" font-size="5.4" fill="#454646" text-anchor="start" >Today, 11:41 - 12:41</text>
<rect x="675.70" y="305.70" width="307.50" height="13.30" fill="#fff" stroke="#dedede" stroke-width="1" rx="1"/>
<polygon points="680.3,310.0 685.3,310.0 683.3,312.4 683.3,315.0 682.3,314.4 682.3,312.4" fill="#7a7a7a"/>
<text x="689.40" y="0" transform="translate(0 314.51) scale(1 1.2)" font-size="6.2" fill="#8f8f8f" text-anchor="start" >Filter by</text>
<text x="675.40" y="0" transform="translate(0 332.43) scale(1 1.2)" font-size="5.95" fill="#454646" text-anchor="start" >11 results found (showing 10)</text>
<line x1="688.50" y1="348.10" x2="979.50" y2="348.10" stroke="#ebebeb" stroke-width="0.8" />
<text x="682.00" y="350.35" font-size="4.6" fill="#555" text-anchor="end" >9</text>
<line x1="688.50" y1="374.17" x2="979.50" y2="374.17" stroke="#ebebeb" stroke-width="0.8" />
<text x="682.00" y="376.41" font-size="4.6" fill="#555" text-anchor="end" >6</text>
<line x1="688.50" y1="400.23" x2="979.50" y2="400.23" stroke="#ebebeb" stroke-width="0.8" />
<text x="682.00" y="402.48" font-size="4.6" fill="#555" text-anchor="end" >3</text>
<line x1="688.50" y1="426.30" x2="979.50" y2="426.30" stroke="#ebebeb" stroke-width="0.8" />
<text x="682.00" y="428.55" font-size="4.6" fill="#555" text-anchor="end" >0</text>
<line x1="688.50" y1="426.30" x2="979.50" y2="426.30" stroke="#d9dfec" stroke-width="0.8" />
<line x1="688.50" y1="348.10" x2="688.50" y2="426.30" stroke="#d9dfec" stroke-width="0.8" />
<line x1="979.50" y1="348.10" x2="979.50" y2="426.30" stroke="#efefef" stroke-width="0.6" />
<rect x="691.60" y="418.11" width="4.60" height="8.09" fill="#fc9e62" />
<rect x="691.60" y="409.42" width="4.60" height="8.09" fill="#3c50d3" />
<rect x="691.60" y="400.73" width="4.60" height="8.09" fill="#f3cf10" />
<rect x="691.60" y="392.04" width="4.60" height="8.09" fill="#ee6423" />
<rect x="691.60" y="383.36" width="4.60" height="8.09" fill="#ddb6f0" />
<rect x="691.60" y="374.67" width="4.60" height="8.09" fill="#4fd3df" />
<rect x="691.60" y="365.98" width="4.60" height="8.09" fill="#fde98c" />
<rect x="691.60" y="357.29" width="4.60" height="8.09" fill="#7a35a3" />
<rect x="700.95" y="418.11" width="4.60" height="8.09" fill="#fc9e62" />
<rect x="700.95" y="409.42" width="4.60" height="8.09" fill="#3c50d3" />
<rect x="700.95" y="400.73" width="4.60" height="8.09" fill="#f3cf10" />
<rect x="700.95" y="392.04" width="4.60" height="8.09" fill="#ee6423" />
<rect x="700.95" y="383.36" width="4.60" height="8.09" fill="#ddb6f0" />
<rect x="700.95" y="374.67" width="4.60" height="8.09" fill="#4fd3df" />
<rect x="700.95" y="365.98" width="4.60" height="8.09" fill="#fde98c" />
<rect x="700.95" y="357.29" width="4.60" height="8.09" fill="#7a35a3" />
<rect x="710.30" y="418.11" width="4.60" height="8.09" fill="#fc9e62" />
<rect x="710.30" y="409.42" width="4.60" height="8.09" fill="#3c50d3" />
<rect x="710.30" y="400.73" width="4.60" height="8.09" fill="#f3cf10" />
<rect x="710.30" y="392.04" width="4.60" height="8.09" fill="#ee6423" />
<rect x="710.30" y="383.36" width="4.60" height="8.09" fill="#ddb6f0" />
<rect x="710.30" y="374.67" width="4.60" height="8.09" fill="#4fd3df" />
<rect x="710.30" y="365.98" width="4.60" height="8.09" fill="#fde98c" />
<rect x="710.30" y="357.29" width="4.60" height="8.09" fill="#7a35a3" />
<rect x="719.65" y="418.11" width="4.60" height="8.09" fill="#fc9e62" />
<rect x="719.65" y="409.42" width="4.60" height="8.09" fill="#3c50d3" />
<rect x="719.65" y="400.73" width="4.60" height="8.09" fill="#f3cf10" />
<rect x="719.65" y="392.04" width="4.60" height="8.09" fill="#ee6423" />
<rect x="719.65" y="383.36" width="4.60" height="8.09" fill="#ddb6f0" />
<rect x="719.65" y="374.67" width="4.60" height="8.09" fill="#4fd3df" />
<rect x="719.65" y="365.98" width="4.60" height="8.09" fill="#fde98c" />
<rect x="719.65" y="357.29" width="4.60" height="8.09" fill="#7a35a3" />
<rect x="729.00" y="418.11" width="4.60" height="8.09" fill="#fc9e62" />
<rect x="729.00" y="409.42" width="4.60" height="8.09" fill="#3c50d3" />
<rect x="729.00" y="400.73" width="4.60" height="8.09" fill="#f3cf10" />
<rect x="729.00" y="392.04" width="4.60" height="8.09" fill="#ee6423" />
<rect x="729.00" y="383.36" width="4.60" height="8.09" fill="#ddb6f0" />
<rect x="729.00" y="374.67" width="4.60" height="8.09" fill="#4fd3df" />
<rect x="729.00" y="365.98" width="4.60" height="8.09" fill="#fde98c" />
<rect x="729.00" y="357.29" width="4.60" height="8.09" fill="#7a35a3" />
<rect x="738.35" y="418.11" width="4.60" height="8.09" fill="#fc9e62" />
<rect x="738.35" y="409.42" width="4.60" height="8.09" fill="#3c50d3" />
<rect x="738.35" y="400.73" width="4.60" height="8.09" fill="#f3cf10" />
<rect x="738.35" y="392.04" width="4.60" height="8.09" fill="#ee6423" />
<rect x="738.35" y="383.36" width="4.60" height="8.09" fill="#ddb6f0" />
<rect x="738.35" y="374.67" width="4.60" height="8.09" fill="#4fd3df" />
<rect x="738.35" y="365.98" width="4.60" height="8.09" fill="#fde98c" />
<rect x="738.35" y="357.29" width="4.60" height="8.09" fill="#7a35a3" />
<rect x="747.70" y="418.11" width="4.60" height="8.09" fill="#fc9e62" />
<rect x="747.70" y="409.42" width="4.60" height="8.09" fill="#3c50d3" />
<rect x="747.70" y="400.73" width="4.60" height="8.09" fill="#ee6423" />
<rect x="747.70" y="392.04" width="4.60" height="8.09" fill="#ddb6f0" />
<rect x="747.70" y="383.36" width="4.60" height="8.09" fill="#4fd3df" />
<rect x="747.70" y="374.67" width="4.60" height="8.09" fill="#fde98c" />
<rect x="747.70" y="365.98" width="4.60" height="8.09" fill="#7a35a3" />
<rect x="757.05" y="418.11" width="4.60" height="8.09" fill="#fc9e62" />
<rect x="757.05" y="409.42" width="4.60" height="8.09" fill="#3c50d3" />
<rect x="757.05" y="400.73" width="4.60" height="8.09" fill="#ee6423" />
<rect x="757.05" y="392.04" width="4.60" height="8.09" fill="#ddb6f0" />
<rect x="757.05" y="383.36" width="4.60" height="8.09" fill="#4fd3df" />
<rect x="757.05" y="374.67" width="4.60" height="8.09" fill="#fde98c" />
<rect x="757.05" y="365.98" width="4.60" height="8.09" fill="#7a35a3" />
<rect x="766.40" y="418.11" width="4.60" height="8.09" fill="#fc9e62" />
<rect x="766.40" y="409.42" width="4.60" height="8.09" fill="#3c50d3" />
<rect x="766.40" y="400.73" width="4.60" height="8.09" fill="#ee6423" />
<rect x="766.40" y="392.04" width="4.60" height="8.09" fill="#ddb6f0" />
<rect x="766.40" y="383.36" width="4.60" height="8.09" fill="#4fd3df" />
<rect x="766.40" y="374.67" width="4.60" height="8.09" fill="#fde98c" />
<rect x="766.40" y="365.98" width="4.60" height="8.09" fill="#7a35a3" />
<rect x="775.75" y="418.11" width="4.60" height="8.09" fill="#fc9e62" />
<rect x="775.75" y="409.42" width="4.60" height="8.09" fill="#3c50d3" />
<rect x="775.75" y="400.73" width="4.60" height="8.09" fill="#ee6423" />
<rect x="775.75" y="392.04" width="4.60" height="8.09" fill="#ddb6f0" />
<rect x="775.75" y="383.36" width="4.60" height="8.09" fill="#4fd3df" />
<rect x="775.75" y="374.67" width="4.60" height="8.09" fill="#fde98c" />
<rect x="775.75" y="365.98" width="4.60" height="8.09" fill="#7a35a3" />
<rect x="785.10" y="418.11" width="4.60" height="8.09" fill="#fc9e62" />
<rect x="785.10" y="409.42" width="4.60" height="8.09" fill="#3c50d3" />
<rect x="785.10" y="400.73" width="4.60" height="8.09" fill="#ee6423" />
<rect x="785.10" y="392.04" width="4.60" height="8.09" fill="#ddb6f0" />
<rect x="785.10" y="383.36" width="4.60" height="8.09" fill="#4fd3df" />
<rect x="785.10" y="374.67" width="4.60" height="8.09" fill="#fde98c" />
<rect x="785.10" y="365.98" width="4.60" height="8.09" fill="#7a35a3" />
<rect x="794.45" y="418.11" width="4.60" height="8.09" fill="#fde98c" />
<rect x="803.80" y="418.11" width="4.60" height="8.09" fill="#fde98c" />
<rect x="813.15" y="418.11" width="4.60" height="8.09" fill="#fde98c" />
<rect x="813.15" y="409.42" width="4.60" height="8.09" fill="#fde98c" />
<rect x="822.50" y="418.11" width="4.60" height="8.09" fill="#fde98c" />
<rect x="831.85" y="418.11" width="4.60" height="8.09" fill="#fde98c" />
<rect x="841.20" y="418.11" width="4.60" height="8.09" fill="#fde98c" />
<rect x="850.55" y="418.11" width="4.60" height="8.09" fill="#fde98c" />
<rect x="859.90" y="418.11" width="4.60" height="8.09" fill="#fde98c" />
<rect x="869.25" y="418.11" width="4.60" height="8.09" fill="#f3cf10" />
<rect x="869.25" y="409.42" width="4.60" height="8.09" fill="#fde98c" />
<rect x="878.60" y="418.11" width="4.60" height="8.09" fill="#f3cf10" />
<rect x="878.60" y="409.42" width="4.60" height="8.09" fill="#fde98c" />
<rect x="887.95" y="418.11" width="4.60" height="8.09" fill="#a06fd0" />
<rect x="887.95" y="409.42" width="4.60" height="8.09" fill="#f3cf10" />
<rect x="887.95" y="400.73" width="4.60" height="8.09" fill="#fde98c" />
<rect x="897.30" y="418.11" width="4.60" height="8.09" fill="#a06fd0" />
<rect x="897.30" y="409.42" width="4.60" height="8.09" fill="#f3cf10" />
<rect x="897.30" y="400.73" width="4.60" height="8.09" fill="#fde98c" />
<rect x="906.65" y="418.11" width="4.60" height="8.09" fill="#a06fd0" />
<rect x="906.65" y="409.42" width="4.60" height="8.09" fill="#f3cf10" />
<rect x="906.65" y="400.73" width="4.60" height="8.09" fill="#fde98c" />
<rect x="916.00" y="418.11" width="4.60" height="8.09" fill="#a06fd0" />
<rect x="916.00" y="409.42" width="4.60" height="8.09" fill="#f3cf10" />
<rect x="916.00" y="400.73" width="4.60" height="8.09" fill="#fde98c" />
<rect x="925.35" y="418.11" width="4.60" height="8.09" fill="#a06fd0" />
<rect x="925.35" y="409.42" width="4.60" height="8.09" fill="#f3cf10" />
<rect x="925.35" y="400.73" width="4.60" height="8.09" fill="#fde98c" />
<rect x="934.70" y="418.11" width="4.60" height="8.09" fill="#a06fd0" />
<rect x="934.70" y="409.42" width="4.60" height="8.09" fill="#f3cf10" />
<rect x="934.70" y="400.73" width="4.60" height="8.09" fill="#fde98c" />
<rect x="944.05" y="418.11" width="4.60" height="8.09" fill="#a06fd0" />
<rect x="944.05" y="409.42" width="4.60" height="8.09" fill="#f3cf10" />
<rect x="944.05" y="400.73" width="4.60" height="8.09" fill="#fde98c" />
<rect x="953.40" y="418.11" width="4.60" height="8.09" fill="#a06fd0" />
<rect x="953.40" y="409.42" width="4.60" height="8.09" fill="#fde98c" />
<rect x="962.75" y="418.11" width="4.60" height="8.09" fill="#a06fd0" />
<rect x="962.75" y="409.42" width="4.60" height="8.09" fill="#fde98c" />
<rect x="972.10" y="418.11" width="4.60" height="8.09" fill="#a06fd0" />
<rect x="972.10" y="409.42" width="4.60" height="8.09" fill="#fde98c" />
<line x1="694.40" y1="426.30" x2="694.40" y2="428.30" stroke="#d9dfec" stroke-width="0.7" />
<text x="694.40" y="434.68" font-size="4.7" fill="#555" text-anchor="middle" >11:40</text>
<line x1="741.07" y1="426.30" x2="741.07" y2="428.30" stroke="#d9dfec" stroke-width="0.7" />
<text x="741.07" y="434.68" font-size="4.7" fill="#555" text-anchor="middle" >11:50</text>
<line x1="787.74" y1="426.30" x2="787.74" y2="428.30" stroke="#d9dfec" stroke-width="0.7" />
<text x="787.74" y="434.68" font-size="4.7" fill="#555" text-anchor="middle" >12:00</text>
<line x1="834.41" y1="426.30" x2="834.41" y2="428.30" stroke="#d9dfec" stroke-width="0.7" />
<text x="834.41" y="434.68" font-size="4.7" fill="#555" text-anchor="middle" >12:10</text>
<line x1="881.08" y1="426.30" x2="881.08" y2="428.30" stroke="#d9dfec" stroke-width="0.7" />
<text x="881.08" y="434.68" font-size="4.7" fill="#555" text-anchor="middle" >12:20</text>
<line x1="927.75" y1="426.30" x2="927.75" y2="428.30" stroke="#d9dfec" stroke-width="0.7" />
<text x="927.75" y="434.68" font-size="4.7" fill="#555" text-anchor="middle" >12:30</text>
<line x1="974.42" y1="426.30" x2="974.42" y2="428.30" stroke="#d9dfec" stroke-width="0.7" />
<text x="974.42" y="434.68" font-size="4.7" fill="#555" text-anchor="middle" >12:40</text>
<rect x="683.00" y="445.90" width="92.00" height="17.70" fill="#f6f6f6" stroke="#e0e0e0" stroke-width="1" rx="1"/>
<rect x="686.30" y="452.60" width="5.20" height="5.20" fill="#fde98c" />
<text x="695.00" y="0" transform="translate(0 458.83) scale(1 1.15)" font-size="9.8" fill="#5bbfd0" text-anchor="start" >2</text>
<text x="702.00" y="0" transform="translate(0 457.61) scale(1 1.2)" font-size="5.9" fill="#2ea3b8" text-anchor="start" >FailedCreate</text>
<rect x="782.50" y="445.90" width="92.00" height="17.70" fill="#f6f6f6" stroke="#e0e0e0" stroke-width="1" rx="1"/>
<rect x="785.80" y="452.60" width="5.20" height="5.20" fill="#f3cf10" />
<text x="794.50" y="0" transform="translate(0 458.83) scale(1 1.15)" font-size="9.8" fill="#5bbfd0" text-anchor="start" >2</text>
<text x="801.50" y="0" transform="translate(0 457.61) scale(1 1.2)" font-size="5.9" fill="#2ea3b8" text-anchor="start" >Sync</text>
<rect x="881.80" y="445.90" width="92.00" height="17.70" fill="#f6f6f6" stroke="#e0e0e0" stroke-width="1" rx="1"/>
<rect x="885.10" y="452.60" width="5.20" height="5.20" fill="#7a35a3" />
<text x="893.80" y="0" transform="translate(0 458.83) scale(1 1.15)" font-size="9.8" fill="#5bbfd0" text-anchor="start" >1</text>
<text x="900.80" y="0" transform="translate(0 457.61) scale(1 1.2)" font-size="5.9" fill="#2ea3b8" text-anchor="start" >Created</text>
<rect x="683.00" y="470.70" width="92.00" height="17.70" fill="#f6f6f6" stroke="#e0e0e0" stroke-width="1" rx="1"/>
<rect x="686.30" y="477.40" width="5.20" height="5.20" fill="#4fd3df" />
<text x="695.00" y="0" transform="translate(0 483.63) scale(1 1.15)" font-size="9.8" fill="#5bbfd0" text-anchor="start" >1</text>
<text x="702.00" y="0" transform="translate(0 482.41) scale(1 1.2)" font-size="5.9" fill="#2ea3b8" text-anchor="start" >OOMKilling</text>
<rect x="782.50" y="470.70" width="92.00" height="17.70" fill="#f6f6f6" stroke="#e0e0e0" stroke-width="1" rx="1"/>
<rect x="785.80" y="477.40" width="5.20" height="5.20" fill="#ddb6f0" />
<text x="794.50" y="0" transform="translate(0 483.63) scale(1 1.15)" font-size="9.8" fill="#5bbfd0" text-anchor="start" >1</text>
<text x="801.50" y="0" transform="translate(0 482.41) scale(1 1.2)" font-size="5.9" fill="#2ea3b8" text-anchor="start" >Pulled</text>
<rect x="881.80" y="470.70" width="92.00" height="17.70" fill="#f6f6f6" stroke="#e0e0e0" stroke-width="1" rx="1"/>
<rect x="885.10" y="477.40" width="5.20" height="5.20" fill="#ee6423" />
<text x="893.80" y="0" transform="translate(0 483.63) scale(1 1.15)" font-size="9.8" fill="#5bbfd0" text-anchor="start" >1</text>
<text x="900.80" y="0" transform="translate(0 482.41) scale(1 1.2)" font-size="5.9" fill="#2ea3b8" text-anchor="start" >Started</text>
<text x="680.40" y="0" transform="translate(0 508.51) scale(1 1.2)" font-size="5.6" fill="#454646" text-anchor="start" >Timestamp</text>
<polygon points="710.2,505.4 713.2,505.4 711.7,507.7" fill="#454646"/>
<text x="750.00" y="0" transform="translate(0 508.51) scale(1 1.2)" font-size="5.6" fill="#6b6b6b" text-anchor="start" >Event</text>
<path d="M767.8 505.5 l1 -1.2 l1 1.2 M767.8 508.0 l1 1.2 l1 -1.2" fill="none" stroke="#aaa" stroke-width="0.5"/>
<text x="979.00" y="0" transform="translate(0 508.51) scale(1 1.2)" font-size="5.6" fill="#454646" text-anchor="end" >Details</text>
<line x1="675.30" y1="514.50" x2="984.30" y2="514.50" stroke="#e8e8e8" stroke-width="0.8" />
<text x="681.30" y="0" transform="translate(0 527.85) scale(1 1.06)" font-size="6.1" fill="#474747" font-weight="bold" text-anchor="start" >today, 12:23</text>
<text x="750.80" y="0" transform="translate(0 528.09) scale(1 1.2)" font-size="6.15" fill="#4f4f4f" text-anchor="start" >{&quot;unmanaged&quot;: {&quot;fs.aio-nr&quot;: &quot;288&quot;}}</text>
<polyline points="968.2,524.50 971.0,527.30 973.8,524.50" fill="none" stroke="#1aa0bd" stroke-width="1.2"/>
<rect x="675.30" y="536.90" width="309.00" height="22.10" fill="#f4f4f4" />
<text x="681.30" y="0" transform="translate(0 549.95) scale(1 1.06)" font-size="6.1" fill="#474747" font-weight="bold" text-anchor="start" >today, 12:18</text>
<text x="750.80" y="0" transform="translate(0 550.19) scale(1 1.2)" font-size="6.15" fill="#4f4f4f" text-anchor="start" >Scheduled for sync</text>
<polyline points="968.2,546.60 971.0,549.40 973.8,546.60" fill="none" stroke="#1aa0bd" stroke-width="1.2"/>
<text x="681.30" y="0" transform="translate(0 572.05) scale(1 1.06)" font-size="6.1" fill="#474747" font-weight="bold" text-anchor="start" >today, 12:07</text>
<text x="750.80" y="0" transform="translate(0 572.29) scale(1 1.2)" font-size="6.15" fill="#4f4f4f" text-anchor="start" >Error creating: pods &quot;unleash-service-ccc68fdc7-&quot; is forbidden: error l...</text>
<polyline points="968.2,568.70 971.0,571.50 973.8,568.70" fill="none" stroke="#1aa0bd" stroke-width="1.2"/>
<rect x="675.30" y="581.10" width="309.00" height="22.10" fill="#f4f4f4" />
<text x="681.30" y="0" transform="translate(0 594.15) scale(1 1.06)" font-size="6.1" fill="#474747" font-weight="bold" text-anchor="start" >today, 11:35</text>
<text x="750.80" y="0" transform="translate(0 594.39) scale(1 1.2)" font-size="6.15" fill="#4f4f4f" text-anchor="start" >Container image &quot;gcr.io/dynatrace-demoability/online-boutique/carts...</text>
<polyline points="968.2,590.80 971.0,593.60 973.8,590.80" fill="none" stroke="#1aa0bd" stroke-width="1.2"/>
<text x="681.30" y="0" transform="translate(0 616.25) scale(1 1.06)" font-size="6.1" fill="#474747" font-weight="bold" text-anchor="start" >today, 11:35</text>
<text x="750.80" y="0" transform="translate(0 616.49) scale(1 1.2)" font-size="6.15" fill="#4f4f4f" text-anchor="start" >Started container server</text>
<polyline points="968.2,612.90 971.0,615.70 973.8,612.90" fill="none" stroke="#1aa0bd" stroke-width="1.2"/>
<rect x="675.30" y="625.30" width="309.00" height="22.10" fill="#f4f4f4" />
<text x="681.30" y="0" transform="translate(0 638.35) scale(1 1.06)" font-size="6.1" fill="#474747" font-weight="bold" text-anchor="start" >today, 11:35</text>
<text x="750.80" y="0" transform="translate(0 638.59) scale(1 1.2)" font-size="6.15" fill="#4f4f4f" text-anchor="start" >Created container server</text>
<polyline points="968.2,635.00 971.0,637.80 973.8,635.00" fill="none" stroke="#1aa0bd" stroke-width="1.2"/>
<text x="681.30" y="0" transform="translate(0 660.45) scale(1 1.06)" font-size="6.1" fill="#474747" font-weight="bold" text-anchor="start" >today, 11:35</text>
<text x="750.80" y="0" transform="translate(0 660.69) scale(1 1.2)" font-size="6.15" fill="#4f4f4f" text-anchor="start" >System OOM encountered, victim process: cartservice, pid: 2639794</text>
<polyline points="968.2,657.10 971.0,659.90 973.8,657.10" fill="none" stroke="#1aa0bd" stroke-width="1.2"/>
<rect x="675.30" y="669.50" width="309.00" height="22.10" fill="#f4f4f4" />
<text x="681.30" y="0" transform="translate(0 682.55) scale(1 1.06)" font-size="6.1" fill="#474747" font-weight="bold" text-anchor="start" >today, 11:35</text>
<text x="750.80" y="0" transform="translate(0 682.79) scale(1 1.2)" font-size="6.15" fill="#4f4f4f" text-anchor="start" >Memory cgroup out of memory: Killed process 2639794 (cartservice) ...</text>
<polyline points="968.2,679.20 971.0,682.00 973.8,679.20" fill="none" stroke="#1aa0bd" stroke-width="1.2"/>
<text x="681.30" y="0" transform="translate(0 704.65) scale(1 1.06)" font-size="6.1" fill="#474747" font-weight="bold" text-anchor="start" >today, 11:35</text>
<text x="750.80" y="0" transform="translate(0 704.89) scale(1 1.2)" font-size="6.15" fill="#4f4f4f" text-anchor="start" >Readiness probe failed:</text>
<polyline points="968.2,701.30 971.0,704.10 973.8,701.30" fill="none" stroke="#1aa0bd" stroke-width="1.2"/>
<rect x="675.30" y="713.70" width="309.00" height="22.10" fill="#f4f4f4" />
<text x="681.30" y="0" transform="translate(0 726.75) scale(1 1.06)" font-size="6.1" fill="#474747" font-weight="bold" text-anchor="start" >today, 11:28</text>
<text x="750.80" y="0" transform="translate(0 726.99) scale(1 1.2)" font-size="6.15" fill="#4f4f4f" text-anchor="start" >Scheduled for sync</text>
<polyline points="968.2,723.40 971.0,726.20 973.8,723.40" fill="none" stroke="#1aa0bd" stroke-width="1.2"/>
<text x="829.00" y="0" transform="translate(0 746.51) scale(1 1.2)" font-size="5.9" fill="#2a9ab0" text-anchor="middle" >Show 1 more</text>
<polyline points="825,753.5 829,757.5 833,753.5" fill="none" stroke="#1aa0bd" stroke-width="1.6"/></svg>

</body></html>
